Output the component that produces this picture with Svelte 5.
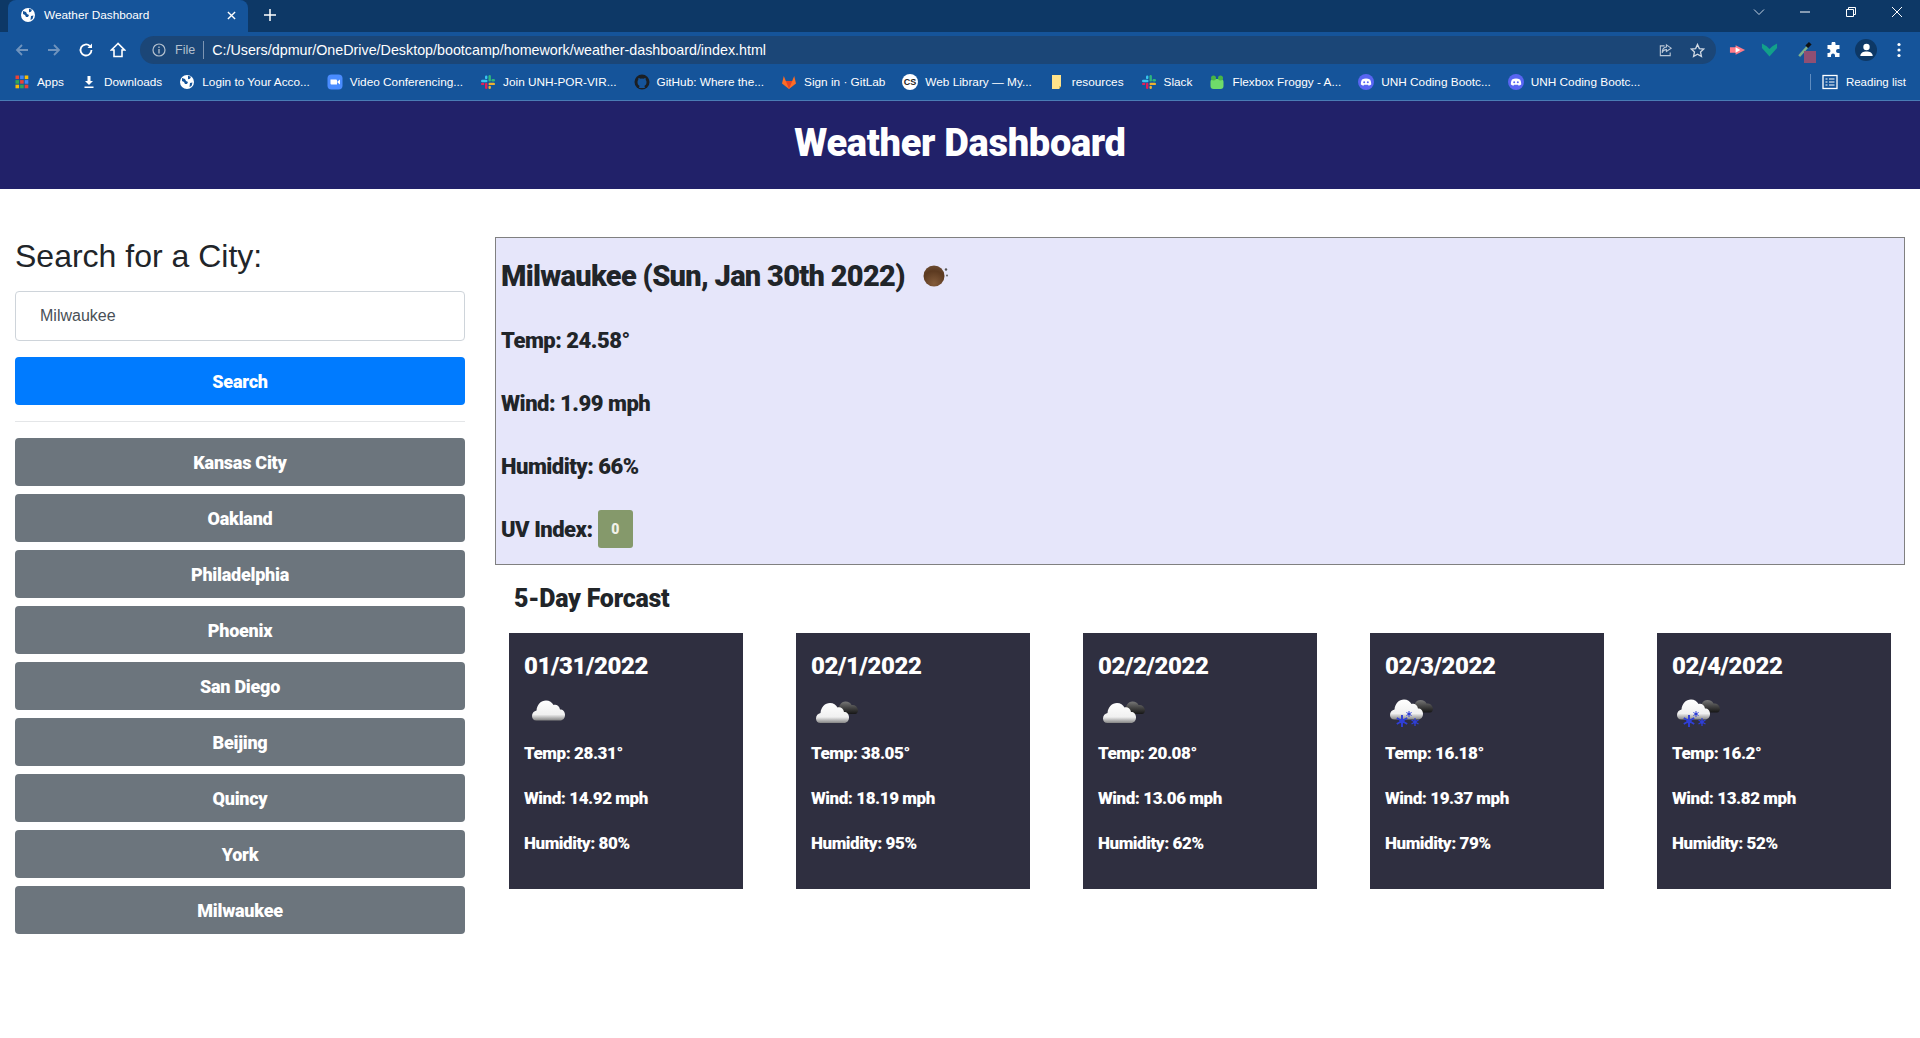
<script>
  const bookmarks = [
    { icon: 'apps', label: 'Apps' },
    { icon: 'download', label: 'Downloads' },
    { icon: 'globe', label: 'Login to Your Acco...' },
    { icon: 'zoom', label: 'Video Conferencing...' },
    { icon: 'slack', label: 'Join UNH-POR-VIR...' },
    { icon: 'github', label: 'GitHub: Where the...' },
    { icon: 'gitlab', label: 'Sign in · GitLab' },
    { icon: 'cs', label: 'Web Library — My...' },
    { icon: 'folder', label: 'resources' },
    { icon: 'slack', label: 'Slack' },
    { icon: 'frog', label: 'Flexbox Froggy - A...' },
    { icon: 'discord', label: 'UNH Coding Bootc...' },
    { icon: 'discord', label: 'UNH Coding Bootc...' }
  ]

  const cities = ['Kansas City', 'Oakland', 'Philadelphia', 'Phoenix', 'San Diego', 'Beijing', 'Quincy', 'York', 'Milwaukee']

  const forecast = [
    { date: '01/31/2022', icon: 'cloud', temp: '28.31', wind: '14.92', humidity: 80 },
    { date: '02/1/2022', icon: 'clouds', temp: '38.05', wind: '18.19', humidity: 95 },
    { date: '02/2/2022', icon: 'clouds', temp: '20.08', wind: '13.06', humidity: 62 },
    { date: '02/3/2022', icon: 'snow', temp: '16.18', wind: '19.37', humidity: 79 },
    { date: '02/4/2022', icon: 'snow', temp: '16.2', wind: '13.82', humidity: 52 }
  ]

  const whiteCloud = 'M9.5 36c-3 0-4.500-2-4.500-4.500 0-3 2-5 4.500-5.500 .5-6 4.500-10 9.500-10 3.500 0 6 2 7.500 4.500 2.500-1 6 .5 6.500 4.500 3 0 5 2 5 5.500 0 3-2 5.500-5 5.500z'
  const darkCloud = 'M27 26c0-5 3-10 7.500-10 3 0 5 1.500 6 3.500 3-.5 6 1.500 6.500 5 0 2-1 4-3 4H31z'
</script>

{#snippet bookmarkIcon(name)}
  <svg class="bm-icon" viewBox="0 0 16 16">
    {#if name === 'apps'}
      {#each [0, 1, 2] as r}
        {#each [0, 1, 2] as c}
          <rect x={1.500 + c * 4.600} y={1.500 + r * 4.600} width="3.600" height="3.600" fill={['#ea4335', '#4285f4', '#fbbc05', '#34a853', '#ea4335', '#4285f4', '#fbbc05', '#34a853', '#ea4335'][r * 3 + c]} />
        {/each}
      {/each}
    {:else if name === 'download'}
      <path d="M6.500 2h3v5h2.500L8 11 4 7h2.500zM3.500 12.500h9V14h-9z" fill="#fff" />
    {:else if name === 'globe'}
      <circle cx="8" cy="8" r="7" fill="#fff" />
      <path d="M3 4l3 1 1 2 2 1-1 2-2 0-1-2-2-1zM9 1.800l3 1-1 2-2 .5zM11 9l2.500-.5-1 3.500-2 1z" fill="#15549a" />
    {:else if name === 'zoom'}
      <rect x="0.500" y="0.500" width="15" height="15" rx="4" fill="#4a8cff" />
      <path d="M3.500 5.500h5.500a1 1 0 0 1 1 1v4H4.500a1 1 0 0 1-1-1zM10.500 7.500l2.500-2v5l-2.500-2z" fill="#fff" />
    {:else if name === 'slack'}
      <rect x="1" y="5.800" width="6.500" height="2.400" rx="1.200" fill="#36c5f0" />
      <rect x="5" y="1.500" width="2.400" height="3.600" rx="1.200" fill="#36c5f0" />
      <rect x="8.500" y="1" width="2.400" height="6.500" rx="1.200" fill="#2eb67d" />
      <rect x="11.500" y="5.100" width="3.500" height="2.400" rx="1.200" fill="#2eb67d" />
      <rect x="8.500" y="8.700" width="6.500" height="2.400" rx="1.200" fill="#ecb22e" />
      <rect x="8.500" y="11.700" width="2.400" height="3.300" rx="1.200" fill="#ecb22e" />
      <rect x="5" y="8.700" width="2.400" height="6.300" rx="1.200" fill="#e01e5a" />
      <rect x="1" y="8.700" width="3.400" height="2.400" rx="1.200" fill="#e01e5a" />
    {:else if name === 'github'}
      <circle cx="8" cy="8" r="7.500" fill="#1b1f23" />
      <path d="M5 14c.6-1.500.4-2.300.4-2.300C3.800 11 3.500 9.500 3.500 8c0-1 .3-1.700.8-2.300-.1-.6 0-1.300.2-1.800.7 0 1.400.4 2 .8a6 6 0 0 1 3 0c.6-.4 1.300-.8 2-.8.2.5.3 1.200.2 1.800.5.600.8 1.300.8 2.300 0 1.500-.3 3-1.900 3.700 0 0-.2.800.4 2.300z" fill="#15549a" />
    {:else if name === 'gitlab'}
      <path d="M8 15 1 9.500 2.800 2l2 5h6.400l2-5L15 9.500z" fill="#fc6d26" />
      <path d="M8 15 4.800 7h6.400z" fill="#e24329" />
    {:else if name === 'cs'}
      <circle cx="8" cy="8" r="8" fill="#fff" />
      <text x="8" y="11" class="cs-text">CS</text>
    {:else if name === 'folder'}
      <path d="M3 1h9v11l-2 3H3z" fill="#ffe38a" />
      <path d="M10 15v-3h2z" fill="#e9c14e" />
    {:else if name === 'frog'}
      <rect x="1.500" y="5" width="13" height="10" rx="3" fill="#6fdc6a" />
      <circle cx="4.500" cy="4" r="2.500" fill="#48b544" />
      <circle cx="11.500" cy="4" r="2.500" fill="#48b544" />
    {:else if name === 'discord'}
      <circle cx="8" cy="8" r="8" fill="#5865f2" />
      <path d="M4 5.500c2.500-1.200 5.500-1.200 8 0 1 1.500 1.300 3.200 1.200 5-1 .7-1.700 1-2.500 1.200l-.6-1H6l-.6 1c-.8-.2-1.600-.5-2.500-1.200-.1-1.800.1-3.500 1.100-5z" fill="#fff" />
      <circle cx="6.200" cy="8.300" r="1" fill="#5865f2" />
      <circle cx="9.800" cy="8.300" r="1" fill="#5865f2" />
    {/if}
  </svg>
{/snippet}

{#snippet flake(x, y, r)}
  <g transform="translate({x} {y}) scale({r})" stroke="#2f3fd6" stroke-width="0.320" fill="none">
    <path d="M0-1V1M-.87-.5.87.5M-.87.5.87-.5" />
    <circle r="0.420" fill="#2f3fd6" stroke="none" />
  </g>
{/snippet}

{#snippet weatherIcon(name)}
  <svg class="weather" viewBox="0 0 50 50">
    <defs>
      <linearGradient id="wc-{name}" x1="0" y1="0" x2="0" y2="1">
        <stop offset="0" stop-color="#fff" />
        <stop offset="0.7" stop-color="#f0f0f0" />
        <stop offset="1" stop-color="#858585" />
      </linearGradient>
      <linearGradient id="dc-{name}" x1="0" y1="0" x2="0" y2="1">
        <stop offset="0" stop-color="#777" />
        <stop offset="0.5" stop-color="#444" />
        <stop offset="1" stop-color="#161616" />
      </linearGradient>
    </defs>
    {#if name === 'cloud'}
      <path d={whiteCloud} transform="translate(3 -2.500)" fill="url(#wc-{name})" />
    {:else if name === 'clouds'}
      <path d={darkCloud} transform="translate(0 -1.500)" fill="url(#dc-{name})" />
      <path d={whiteCloud} fill="url(#wc-{name})" />
    {:else}
      <path d={darkCloud} transform="translate(1 -3)" fill="url(#dc-{name})" />
      <path d={whiteCloud} transform="translate(0 -3.500)" fill="url(#wc-{name})" />
      {@render flake(17, 34, 6)}
      {@render flake(24, 27, 3)}
      {@render flake(30, 35, 4)}
    {/if}
  </svg>
{/snippet}

<div class="browser">
  <div class="tabstrip">
    <div class="tab">
      <svg class="tab-icon" viewBox="0 0 16 16">
        <circle cx="8" cy="8" r="7" fill="#fff" />
        <path d="M3 4l3 1 1 2 2 1-1 2-2 0-1-2-2-1zM9 1.800l3 1-1 2-2 .5zM11 9l2.500-.5-1 3.500-2 1z" fill="#15549a" />
      </svg>
      <span class="tab-title">Weather Dashboard</span>
      <svg class="tab-close" viewBox="0 0 10 10"><path d="M1 1l8 8M9 1l-8 8" stroke="#fff" stroke-width="1.500" /></svg>
    </div>
    <svg class="newtab" viewBox="0 0 12 12"><path d="M6 0v12M0 6h12" stroke="#fff" stroke-width="1.500" /></svg>
    <div class="win-controls">
      <svg class="win" viewBox="0 0 12 12"><path d="M1 3.500l5 5 5-5" fill="none" stroke="#c5d3e3" /></svg>
      <svg class="win" viewBox="0 0 12 12"><path d="M1 6h10" stroke="#fff" /></svg>
      <svg class="win" viewBox="0 0 12 12"><path d="M1.500 3.500h7v7h-7zM3.500 3.500v-2h7v7h-2" fill="none" stroke="#fff" /></svg>
      <svg class="win" viewBox="0 0 12 12"><path d="M1 1l10 10M11 1L1 11" stroke="#fff" /></svg>
    </div>
  </div>

  <div class="toolbar">
    <div class="nav">
      <svg viewBox="0 0 16 16"><path d="M14 8H3M8 3 3 8l5 5" fill="none" stroke="#6f93bd" stroke-width="1.800" /></svg>
      <svg viewBox="0 0 16 16"><path d="M2 8h11M8 3l5 5-5 5" fill="none" stroke="#6f93bd" stroke-width="1.800" /></svg>
      <svg viewBox="0 0 16 16"><path d="M13.500 8A5.500 5.500 0 1 1 11.800 4" fill="none" stroke="#fff" stroke-width="1.800" /><path d="M14 1.500V6H9.500z" fill="#fff" /></svg>
      <svg viewBox="0 0 16 16"><path d="M8 1.500 1.500 8H4v6.500h8V8h2.500z" fill="none" stroke="#fff" stroke-width="1.600" /></svg>
    </div>
    <div class="omnibox">
      <svg class="info" viewBox="0 0 14 14"><circle cx="7" cy="7" r="6" fill="none" stroke="#b4c0ce" stroke-width="1.200" /><path d="M7 6v4.500M7 3.500v1.500" stroke="#b4c0ce" stroke-width="1.300" /></svg>
      <span class="file">File</span>
      <span class="sep"></span>
      <span class="url">C:/Users/dpmur/OneDrive/Desktop/bootcamp/homework/weather-dashboard/index.html</span>
      <svg class="omni-right" viewBox="0 0 16 16"><path d="M7 3H2.500v10.500H13V10M9 2l5 3.500L9 9V7C6.500 7 5 8.500 4.500 10.500 4.500 7 6 4.500 9 4.200z" fill="none" stroke="#b9c6d6" stroke-width="1.200" /></svg>
      <svg class="omni-right" viewBox="0 0 16 16"><path d="M8 1.500l2 4.400 4.700.5-3.500 3.200 1 4.700L8 11.900l-4.200 2.400 1-4.700L1.300 6.400 6 5.900z" fill="none" stroke="#d0d8e2" stroke-width="1.400" /></svg>
    </div>
    <div class="extensions">
      <svg viewBox="0 0 18 16"><path d="M1 5h6V3l10 5-10 5v-2H1z" fill="#ff7b88" /><path d="M7 5l5 3-5 3z" fill="#fff" /></svg>
      <svg viewBox="0 0 18 16"><path d="M1 1l5 3 3 3 3-3 5-3v5l-8 9-8-9z" fill="#12a08a" /></svg>
      <span class="picker">
        <svg viewBox="0 0 18 18"><path d="M2 16l9-10 2 2-9 10z" fill="#7fb08a" /><path d="M10 5l4-4 3 3-4 4z" fill="#111" /></svg>
        <span class="picker-swatch"></span>
      </span>
      <svg class="puzzle" viewBox="0 0 16 16"><path d="M6 1.500a2 2 0 0 1 4 0V3h4v4h-1.500a2 2 0 0 0 0 4H14v4H9.500v-1.500a2 2 0 0 0-4 0V15H2v-4h1a2 2 0 0 0 0-4H2V3h4z" fill="#fff" /></svg>
      <span class="avatar">
        <svg viewBox="0 0 16 16"><circle cx="8" cy="5" r="3.200" fill="#fff" /><path d="M1.800 14c0-3.200 3-4.500 6.200-4.500s6.200 1.300 6.200 4.500z" fill="#fff" /></svg>
      </span>
      <svg class="dots" viewBox="0 0 4 16"><circle cx="2" cy="2.500" r="1.600" fill="#fff" /><circle cx="2" cy="8" r="1.600" fill="#fff" /><circle cx="2" cy="13.500" r="1.600" fill="#fff" /></svg>
    </div>
  </div>

  <div class="bookmarks">
    {#each bookmarks as b}
      <div class="bookmark">
        {@render bookmarkIcon(b.icon)}
        <span>{b.label}</span>
      </div>
    {/each}
    <div class="reading">
      <svg class="bm-icon" viewBox="0 0 16 16"><rect x="1" y="1.500" width="14" height="13" fill="none" stroke="#fff" stroke-width="1.300" /><path d="M3.500 5h2M7 5h5.500M3.500 8h2M7 8h5.500M3.500 11h2M7 11h5.500" stroke="#fff" stroke-width="1.200" /></svg>
      <span>Reading list</span>
    </div>
  </div>
</div>

<header class="banner">
  <h1>Weather Dashboard</h1>
</header>

<div class="page">
  <aside class="sidebar">
    <h2 class="search-title">Search for a City:</h2>
    <input class="search-input" type="text" value="Milwaukee" />
    <button class="btn primary">Search</button>
    <hr />
    <div class="history">
      {#each cities as city}
        <button class="btn secondary">{city}</button>
      {/each}
    </div>
  </aside>

  <main class="content">
    <section class="current">
      <div class="current-title">
        <h2>Milwaukee (Sun, Jan 30th 2022)</h2>
        <svg class="moon" viewBox="0 0 50 50">
          <defs>
            <radialGradient id="moon" cx="0.5" cy="0.85" r="0.95">
              <stop offset="0" stop-color="#835b3a" />
              <stop offset="0.62" stop-color="#5c3a20" />
              <stop offset="0.88" stop-color="#6b4a30" />
              <stop offset="1" stop-color="#c8b09a" />
            </radialGradient>
          </defs>
          <circle cx="25" cy="25" r="10.500" fill="url(#moon)" />
          <circle cx="37" cy="18.500" r="1.200" fill="#555" />
          <circle cx="38" cy="24.500" r="1" fill="#666" />
        </svg>
      </div>
      <p>Temp: 24.58°</p>
      <p>Wind: 1.99 mph</p>
      <p>Humidity: 66%</p>
      <p>UV Index:<span class="uv">0</span></p>
    </section>

    <h3 class="forecast-title">5-Day Forcast</h3>

    <div class="forecast">
      {#each forecast as day}
        <article class="card">
          <h4>{day.date}</h4>
          {@render weatherIcon(day.icon)}
          <p>Temp: {day.temp}°</p>
          <p>Wind: {day.wind} mph</p>
          <p>Humidity: {day.humidity}%</p>
        </article>
      {/each}
    </div>
  </main>
</div>

<style>
  :global(body) {
    margin: 0;
    background: #fff;
    color: #212529;
    font-family: "Liberation Sans", Arial, sans-serif;
  }

  .browser {
    height: 100px;
    background: #15549a;
    color: #fff;
    font-size: 12px;
    border-bottom: 1px solid #4a7cb5;
  }

  .tabstrip {
    display: flex;
    align-items: flex-start;
    height: 32px;
    background: #0d3866;
    padding-left: 8px;
  }

  .tab {
    display: flex;
    align-items: center;
    width: 240px;
    height: 32px;
    box-sizing: border-box;
    padding: 0 12px 2px;
    background: #15549a;
    border-radius: 8px 8px 0 0;
  }

  .tab-icon {
    width: 16px;
    height: 16px;
    flex: none;
  }

  .tab-title {
    margin-left: 8px;
    flex: 1;
    font-size: 11.800px;
  }

  .tab-close {
    width: 9px;
    height: 9px;
  }

  .newtab {
    width: 12px;
    height: 12px;
    margin: 9px 0 0 16px;
  }

  .win-controls {
    margin-left: auto;
    display: flex;
    gap: 34px;
    padding: 6px 17px 0 0;
  }

  .win {
    width: 12px;
    height: 12px;
  }

  .toolbar {
    display: flex;
    align-items: center;
    height: 36px;
  }

  .nav {
    display: flex;
    gap: 16px;
    width: 140px;
    box-sizing: border-box;
    padding-left: 14px;
  }

  .nav svg {
    width: 16px;
    height: 16px;
  }

  .omnibox {
    display: flex;
    align-items: center;
    width: 1576px;
    height: 28px;
    box-sizing: border-box;
    padding: 0 10px 0 12px;
    background: #1b4677;
    border-radius: 14px;
  }

  .info {
    width: 14px;
    height: 14px;
    flex: none;
  }

  .file {
    margin-left: 9px;
    color: #b4c0ce;
    font-size: 12.500px;
  }

  .sep {
    width: 1px;
    height: 18px;
    margin: 0 8px;
    background: #7d95b2;
  }

  .url {
    flex: 1;
    font-size: 14.300px;
  }

  .omni-right {
    width: 15px;
    height: 15px;
    margin-left: 17px;
  }

  .omni-right:last-child {
    margin-right: 1px;
  }

  .extensions {
    display: flex;
    align-items: center;
    gap: 15px;
    padding-left: 13px;
  }

  .extensions svg {
    width: 17px;
    height: 16px;
    flex: none;
  }

  .picker {
    position: relative;
    display: block;
    width: 17px;
    height: 18px;
    margin-left: 3px;
  }

  .picker-swatch {
    position: absolute;
    left: 8px;
    top: 10px;
    width: 12px;
    height: 12px;
    background: #8f4f73;
  }

  .extensions .puzzle {
    margin-left: -3px;
  }

  .avatar {
    display: flex;
    align-items: center;
    justify-content: center;
    width: 22px;
    height: 22px;
    margin-left: -2px;
    border-radius: 50%;
    background: #0d3866;
  }

  .extensions .dots {
    width: 4px;
    margin-left: 5px;
  }

  .bookmarks {
    display: flex;
    align-items: center;
    height: 31px;
    box-sizing: border-box;
    padding: 0 0 4px 14px;
    gap: 17px;
  }

  .bookmark {
    display: flex;
    align-items: center;
    gap: 7px;
    white-space: nowrap;
    font-size: 11.800px;
  }

  .bm-icon {
    width: 16px;
    height: 16px;
    flex: none;
  }

  .cs-text {
    font-size: 9px;
    font-weight: 700;
    text-anchor: middle;
    fill: #222;
  }

  .reading {
    display: flex;
    align-items: center;
    gap: 8px;
    margin-left: auto;
    padding: 0 14px 0 11px;
    border-left: 1px solid #5f8cc0;
    height: 16px;
    font-size: 11.500px;
  }

  .banner {
    height: 88px;
    box-sizing: border-box;
    padding-bottom: 4px;
    display: flex;
    align-items: center;
    justify-content: center;
    background: #212169;
    color: #fff;
  }

  .banner h1 {
    margin: 0;
    font-family: Roboto, sans-serif;
    font-size: 38px;
    font-weight: 900;
    letter-spacing: -0.300px;
  }

  .page {
    display: flex;
    align-items: flex-start;
  }

  .sidebar {
    width: 480px;
    box-sizing: border-box;
    padding: 48px 15px 0;
    flex: none;
    display: flex;
    flex-direction: column;
  }

  .search-title {
    margin: 0 0 16px;
    font-size: 32px;
    font-weight: 400;
    line-height: 38px;
  }

  .search-input {
    height: 50px;
    box-sizing: border-box;
    padding: 0 24px;
    border: 1px solid #ced4da;
    border-radius: 4px;
    color: #495057;
    font: 16px "Liberation Sans", Arial, sans-serif;
  }

  .btn {
    height: 48px;
    width: 100%;
    padding: 1px 0 0;
    border: 0;
    border-radius: 4px;
    color: #fff;
    font-family: Roboto, sans-serif;
    font-size: 18px;
    font-weight: 900;
    letter-spacing: -0.250px;
  }

  .primary {
    margin-top: 16px;
    background: #007bff;
  }

  .secondary {
    background: #6c757d;
  }

  hr {
    width: 100%;
    margin: 16px 0;
    border: 0;
    border-top: 1px solid #e4e6e8;
  }

  .history {
    display: flex;
    flex-direction: column;
    gap: 8px;
  }

  .content {
    flex: 1;
    padding: 48px 15px 0;
    min-width: 0;
  }

  .current {
    display: flex;
    flex-direction: column;
    height: 328px;
    box-sizing: border-box;
    padding: 13px 5px 0;
    background: #e6e6fa;
    border: 1px solid #808080;
    font-family: Roboto, sans-serif;
    font-weight: 900;
  }

  .current-title {
    display: flex;
    align-items: center;
    flex: none;
    height: 50px;
    margin-bottom: 20px;
  }

  .current-title h2 {
    margin: 0;
    font-size: 29px;
    font-weight: 900;
    letter-spacing: -0.700px;
  }

  .moon {
    width: 50px;
    height: 50px;
    margin-left: 4px;
  }

  .current p {
    display: flex;
    align-items: center;
    flex: none;
    gap: 5px;
    margin: 0 0 25px;
    height: 38px;
    font-size: 22px;
    letter-spacing: -0.500px;
  }

  .uv {
    display: flex;
    align-items: center;
    justify-content: center;
    width: 35px;
    height: 38px;
    border-radius: 3px;
    background: #85996b;
    color: #f1f1e8;
    font-size: 14px;
  }

  .forecast-title {
    margin: 0;
    height: 68px;
    padding-left: 19px;
    line-height: 68px;
    font-family: Roboto, sans-serif;
    font-size: 25px;
    font-weight: 900;
    letter-spacing: -0.250px;
  }

  .forecast {
    display: flex;
    justify-content: space-between;
    padding: 0 14px;
  }

  .card {
    width: 234px;
    height: 256px;
    box-sizing: border-box;
    padding: 16px 15px 0;
    background: #2f2f40;
    color: #fff;
    font-family: Roboto, sans-serif;
    font-weight: 900;
  }

  .card h4 {
    margin: 0;
    height: 34px;
    line-height: 34px;
    font-size: 24px;
    font-weight: 900;
    letter-spacing: -0.400px;
  }

  .weather {
    display: block;
    width: 50px;
    height: 50px;
    margin-top: 4px;
  }

  .card p {
    margin: 0 0 23px;
    height: 22px;
    line-height: 22px;
    font-size: 17px;
    letter-spacing: -0.450px;
  }

  .weather + p {
    margin-top: 5px;
  }
</style>
